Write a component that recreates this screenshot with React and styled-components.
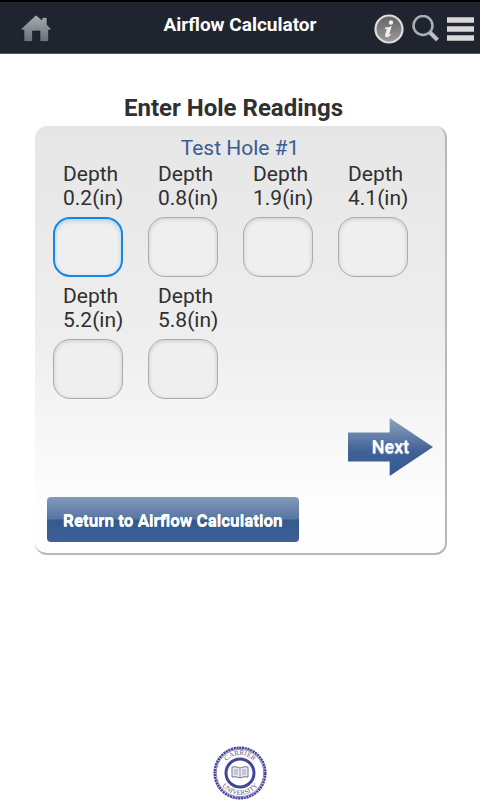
import React from 'react';
import styled, { createGlobalStyle } from 'styled-components';

const colors = {
  bar: '#1f242f',
  text: '#303030',
  blue: '#3b5b93',
  focus: '#1687e0',
  seal: '#45459a',
};

const depths = ['0.2', '0.8', '1.9', '4.1', '5.2', '5.8'];

const GlobalStyle = createGlobalStyle`
  * {
    box-sizing: border-box;
  }
  body {
    margin: 0;
    background: white;
    color: ${colors.text};
    font-family: Roboto, 'Liberation Sans', sans-serif;
  }
`;

const Page = styled.div`
  display: flex;
  flex-direction: column;
  min-height: 100vh;
`;

const Toolbar = styled.header`
  display: grid;
  grid-template-columns: 1fr auto 1fr;
  align-items: center;
  height: 54px;
  padding: 3px 6px 0;
  border-top: 2px solid black;
  border-bottom: 1px solid #555963;
  background: ${colors.bar};
`;

const ToolbarTitle = styled.h1`
  margin: 0;
  padding: 0 0 8px;
  color: white;
  font-size: 19px;
  line-height: 24px;
`;

const HomeLink = styled.a`
  display: flex;
  justify-self: start;
  padding-left: 14px;
`;

const Actions = styled.div`
  display: flex;
  justify-content: flex-end;
  align-items: center;
  gap: 7px;
`;

const IconButton = styled.button`
  display: flex;
  padding: 0;
  border: 0;
  background: none;
`;

const Main = styled.main`
  flex: 1;
  padding: 40px 33px 0 35px;
`;

const PageTitle = styled.h2`
  margin: 0 0 4px;
  padding-right: 15px;
  font-size: 24px;
  line-height: 28px;
  text-align: center;
`;

const Card = styled.form`
  padding: 9px 12px 11px;
  border: solid #b8b8b8;
  border-width: 0 2px 2px 0;
  border-radius: 12px;
  background: linear-gradient(#e6e6e6, #eeeeee 50%, #fefefe 90%);
`;

const HoleTitle = styled.h3`
  margin: 0;
  color: ${colors.blue};
  font-size: 21px;
  font-weight: 400;
  line-height: 27px;
  text-align: center;
`;

const Readings = styled.div`
  display: grid;
  grid-template-columns: repeat(4, 1fr);
  row-gap: 7px;
  padding: 0 0 0 6px;
`;

const Reading = styled.label`
  display: flex;
  flex-direction: column;
  align-items: flex-start;
  font-size: 21px;
  line-height: 24px;
`;

const ReadingName = styled.span`
  padding-left: 10px;
  white-space: nowrap;
`;

const ReadingInput = styled.input`
  width: 70px;
  height: 60px;
  margin-top: 7px;
  padding: 0 8px;
  border: 1px solid #ababab;
  border-radius: 17px;
  outline: none;
  background: #efefef;
  box-shadow: inset 0 1px 4px rgba(0, 0, 0, 0.16);
  font: inherit;
  &:focus {
    border: 2px solid ${colors.focus};
    box-shadow: inset 0 2px 4px rgba(22, 135, 224, 0.3);
  }
`;

const NextRow = styled.div`
  display: flex;
  justify-content: flex-end;
  padding: 19px 0 21px;
`;

const NextButton = styled.button`
  width: 85px;
  height: 58px;
  padding: 0;
  border: 0;
  background: linear-gradient(#8fa3bd, #3f6196 58%, #355991);
  clip-path: polygon(0 25%, 49% 25%, 49% 0, 100% 50%, 49% 100%, 49% 75%, 0 75%);
  color: white;
  font: 500 18px/24px Roboto, sans-serif;
  text-shadow: 0 1px 1px #dce6f8;
`;

const ReturnButton = styled.button`
  display: block;
  height: 45px;
  padding: 0 16px;
  border: 0;
  border-radius: 4px;
  background: linear-gradient(#8399b8, #5776a4 49%, #345a8f 51%, #3c5f96);
  color: white;
  font: 700 17px/24px Roboto, sans-serif;
  text-shadow: 0 1px 0 #edf2fc;
  white-space: nowrap;
`;

const Footer = styled.footer`
  display: flex;
  justify-content: center;
`;

const HomeIcon = () => (
  <svg width="32" height="32" viewBox="0 0 32 32" aria-hidden="true">
    <defs>
      <linearGradient id="home" x2="0" y2="1">
        <stop offset="0" stopColor="#a4adb0" />
        <stop offset="1" stopColor="#677276" />
      </linearGradient>
    </defs>
    <path
      d="M16 2L22 7V4.500H27V11.500L31 16V17H28.500V28.500H20V18H12.500V28.500H4V17H1V16Z"
      fill="url(#home)"
      stroke="#151b21"
      strokeWidth=".6"
    />
  </svg>
);

const InfoIcon = () => (
  <svg width="30" height="30" viewBox="0 0 30 30" aria-hidden="true">
    <defs>
      <linearGradient id="info" x2="0" y2="1">
        <stop offset="0" stopColor="#626262" />
        <stop offset="1" stopColor="#9b9b9b" />
      </linearGradient>
    </defs>
    <circle cx="15" cy="15" r="13.500" fill="url(#info)" stroke="#dedede" strokeWidth="2.200" />
    <circle cx="17" cy="8.500" r="2.200" fill="#eee" />
    <path
      d="M11 13.500Q14.500 13.500 17.800 12L15.200 20Q15 21.200 17.500 19.500Q15.500 23.300 13 23.300Q10.300 23.300 11.300 20L12.900 15H11Z"
      fill="#eee"
    />
  </svg>
);

const SearchIcon = () => (
  <svg width="29" height="29" viewBox="0 0 29 29" fill="none" aria-hidden="true">
    <circle cx="12" cy="10.500" r="9.500" stroke="#aaaeb5" strokeWidth="2.500" />
    <path d="M18.500 17L26.500 25" stroke="#aaaeb5" strokeWidth="4.500" />
    <path d="M19 17.500L26 24.500" stroke="#c4c7cc" strokeWidth="2" />
  </svg>
);

const MenuIcon = () => (
  <svg width="27" height="24" viewBox="0 0 27 24" aria-hidden="true">
    <path d="M0 0H27V6H0ZM0 9H27V15H0ZM0 18H27V24H0Z" fill="#aaa" />
    <path d="M0 1H27V5H0ZM0 10H27V14H0ZM0 19H27V23H0Z" fill="#d9d9d9" />
  </svg>
);

const Seal = () => (
  <svg width="56" height="54" viewBox="0 0 56 54" role="img" aria-label="Carrier University">
    <defs>
      <path id="sealTop" d="M10 27A18 18 0 0 1 46 27" />
      <path id="sealBottom" d="M6 27A22 22 0 0 0 50 27" />
    </defs>
    <circle cx="28" cy="27" r="25.300" fill="white" stroke={colors.seal} strokeWidth="2.500" strokeDasharray="2.200 .6" />
    <circle cx="28" cy="27" r="23.700" fill="none" stroke="#8585bd" strokeWidth="1" />
    <circle cx="28" cy="27" r="14" fill="white" stroke={colors.seal} strokeWidth="3" />
    <g fill="#66668c" fontFamily="Liberation Serif, serif" fontSize="7" textAnchor="middle">
      <text><textPath href="#sealTop" startOffset="50%">CARRIER</textPath></text>
      <text><textPath href="#sealBottom" startOffset="50%">UNIVERSITY</textPath></text>
    </g>
    <path d="M20 21Q24 20 28 22Q32 20 36 21V31Q32 30 28 32Q24 30 20 31Z" fill="#e9e9f2" stroke="#77779f" />
    <path d="M28 22V32M22 24H26M22 26H26M22 28H26M30 24H34M30 26H34M30 28H34" stroke="#8c8caa" strokeWidth=".8" />
  </svg>
);

const App = () => (
  <>
    <GlobalStyle />
    <Page>
      <Toolbar>
        <HomeLink href="#home" aria-label="Home"><HomeIcon /></HomeLink>
        <ToolbarTitle>Airflow Calculator</ToolbarTitle>
        <Actions>
          <IconButton aria-label="Info"><InfoIcon /></IconButton>
          <IconButton aria-label="Search"><SearchIcon /></IconButton>
          <IconButton aria-label="Menu"><MenuIcon /></IconButton>
        </Actions>
      </Toolbar>
      <Main>
        <PageTitle>Enter Hole Readings</PageTitle>
        <Card>
          <HoleTitle>Test Hole #1</HoleTitle>
          <Readings>
            {depths.map((depth, idx) => (
              <Reading key={depth}>
                <ReadingName>
                  Depth
                  <br />
                  {`${depth}(in)`}
                </ReadingName>
                <ReadingInput type="text" inputMode="decimal" autoFocus={idx === 0} />
              </Reading>
            ))}
          </Readings>
          <NextRow>
            <NextButton type="button">Next</NextButton>
          </NextRow>
          <ReturnButton type="button">Return to Airflow Calculation</ReturnButton>
        </Card>
      </Main>
      <Footer><Seal /></Footer>
    </Page>
  </>
);

export default App;
